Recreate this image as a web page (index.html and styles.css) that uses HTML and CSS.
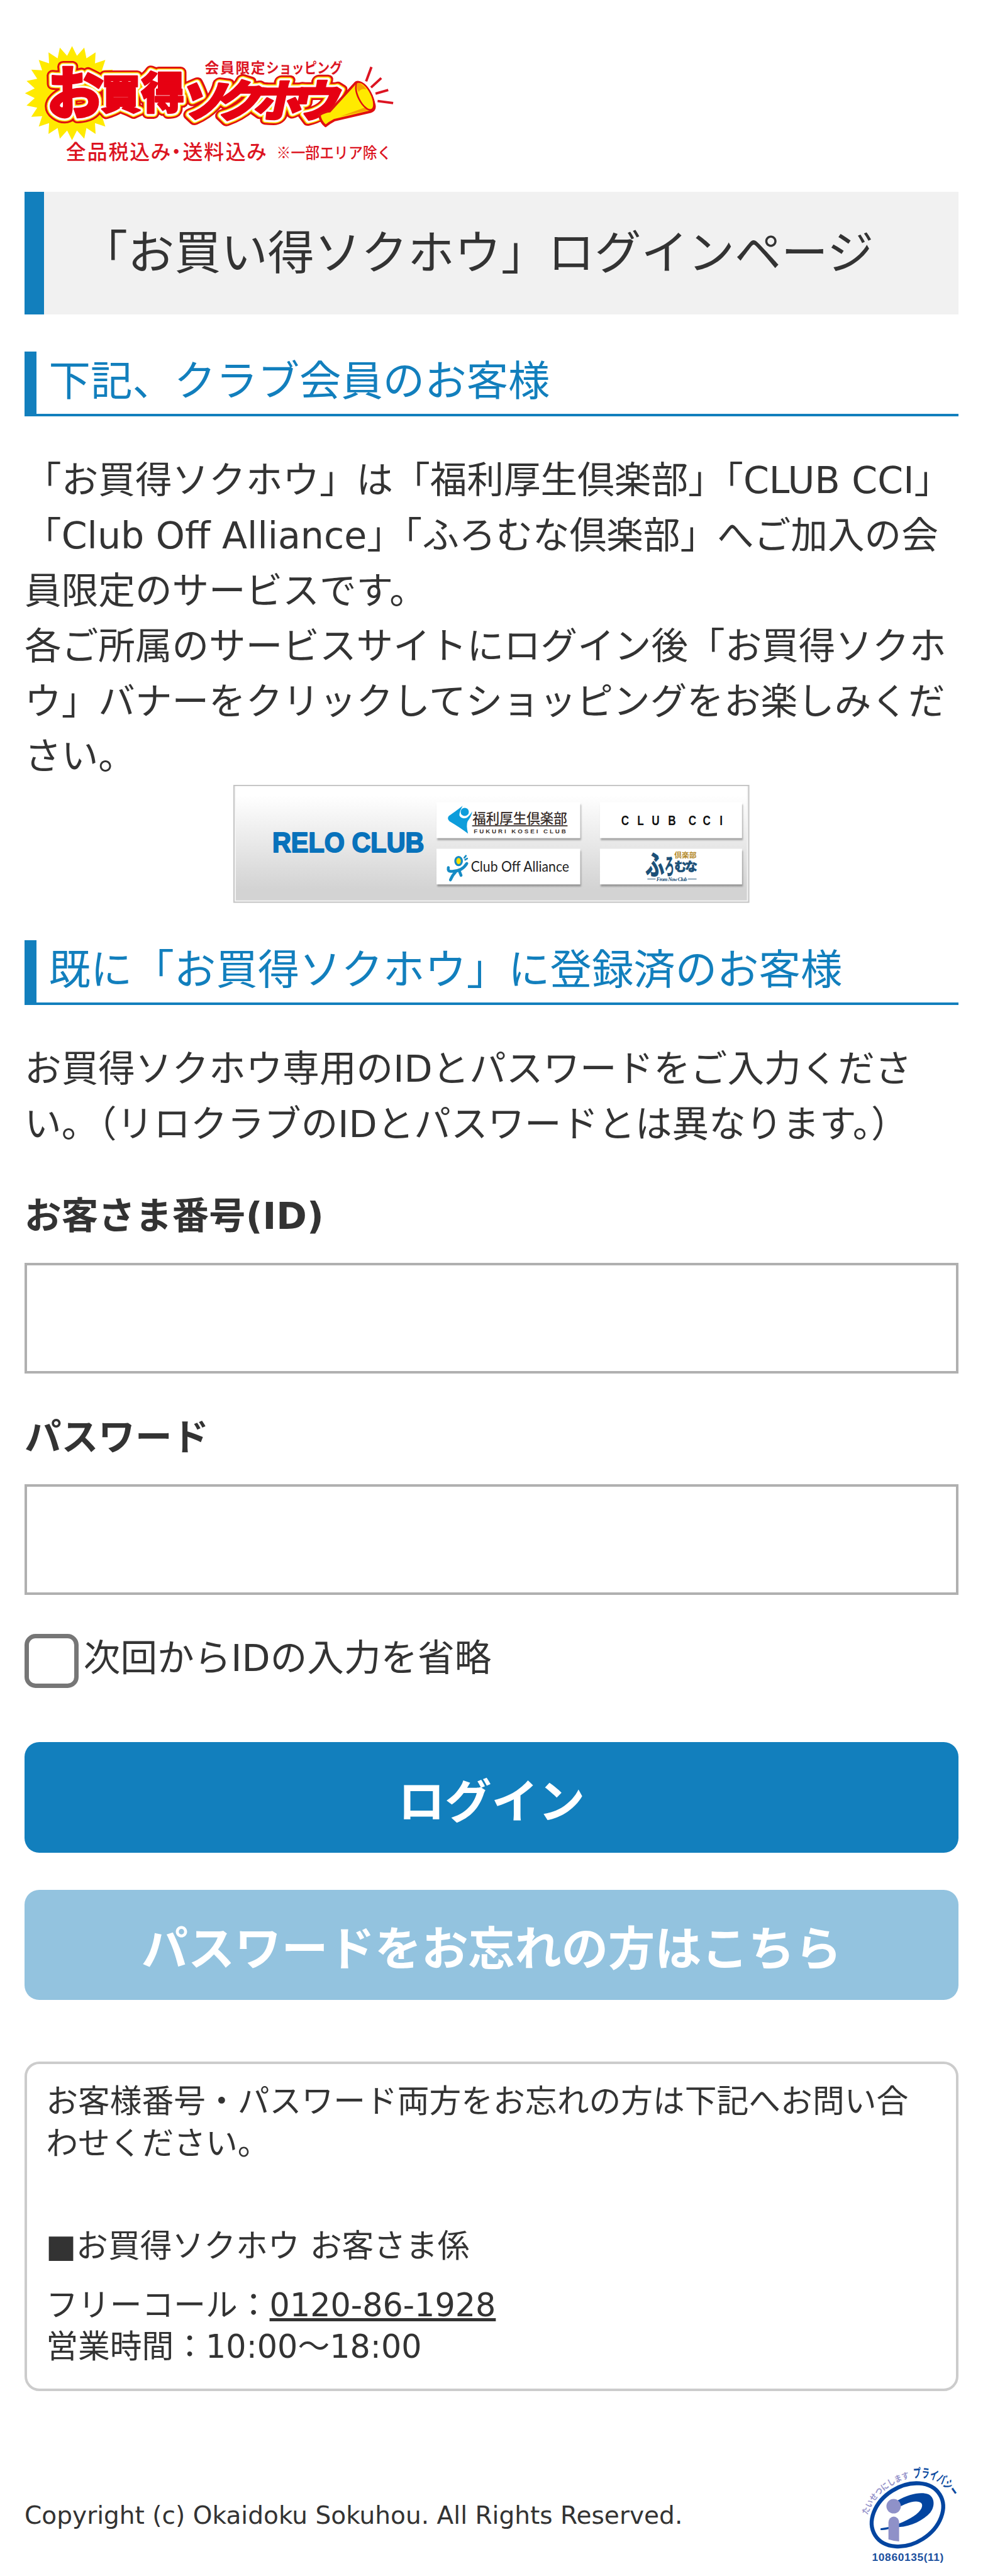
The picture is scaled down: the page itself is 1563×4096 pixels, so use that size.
FILE: index.html
```html
<!DOCTYPE html>
<html lang="ja">
<head>
  <meta charset="UTF-8">
  <title>お買得ソクホウ ログイン</title>
  <link rel="stylesheet" href="styles.css">
</head>
<body>

  <header>
    <svg class="logo" viewBox="0 0 900 330">
      <polygon fill="#ffea00" transform="translate(116 137)" points="0,-115 12,-91.2 29.8,-111.1 35.2,-85 57.5,-99.6 56,-73 81.3,-81.3 73,-56 99.6,-57.5 85,-35.2 111.1,-29.8 91.2,-12 115,0 91.2,12 111.1,29.8 85,35.2 99.6,57.5 73,56 81.3,81.3 56,73 57.5,99.6 35.2,85 29.8,111.1 12,91.2 0,115 -12,91.2 -29.8,111.1 -35.2,85 -57.5,99.6 -56,73 -81.3,81.3 -73,56 -99.6,57.5 -85,35.2 -111.1,29.8 -91.2,12 -115,0 -91.2,-12 -111.1,-29.8 -85,-35.2 -99.6,-57.5 -73,-56 -81.3,-81.3 -56,-73 -57.5,-99.6 -35.2,-85 -29.8,-111.1 -12,-91.2"/>
      <defs>
        <g id="name" class="logo-name">
          <text x="54" y="187" font-size="140">お</text>
          <text x="186" y="175" font-size="98">買</text>
          <text x="285" y="175" font-size="106">得</text>
          <text transform="translate(374 195) skewX(-12) scale(1.1 1)" x="0 80 165 250" y="0" font-size="108">ソクホウ</text>
        </g>
      </defs>
      <use href="#name" class="edge-red"/>
      <use href="#name" class="edge-yellow"/>
      <use href="#name" class="edge-white"/>
      <use href="#name" class="edge-none"/>
      <!-- megaphone -->
      <path d="M720 190Q733 182 745 181Q775 148 806 114Q815 103 832 121Q849 141 854 165Q857 178 845 182L756 203Q746 208 735 217Q722 206 720 190Z" fill="#ffea00" stroke="#e01010" stroke-width="6" stroke-linejoin="round"/>
      <path d="M770 194L836 170L845 178Z" fill="#f5a300"/>
      <ellipse cx="831" cy="144" rx="16" ry="37" transform="rotate(-27 831 144)" fill="#ffea00" stroke="#e01010" stroke-width="4"/>
      <path d="M811 117Q811 109 820 113Q829 119 835 128Q822 124 816 134Q811 126 811 117Z" fill="#f5a300"/>
      <path d="M847 73L834 108M871 100L846 123M888 129L857 138M862 156L900 161" stroke="#dc1422" stroke-width="6"/>
      <g class="logo-copy">
        <text x="440 477.500 515 552.500" y="87" font-size="35" font-weight="700">会員限定</text>
        <text x="590" y="87" font-size="35" font-weight="700" textLength="186" lengthAdjust="spacingAndGlyphs">ショッピング</text>
        <text x="101 153 205 257 308 346 386 438 491 542" y="298" font-size="49">全品税込み・送料込み</text>
        <text x="615" y="296" font-size="38" textLength="281" lengthAdjust="spacingAndGlyphs">※一部エリア除く</text>
      </g>
    </svg>
  </header>

  <h1>「お買い得ソクホウ」ログインページ</h1>

  <h2>下記、クラブ会員のお客様</h2>
  <p>「お買得ソクホウ」は「福利厚生倶楽部」「CLUB CCI」「Club Off Alliance」「ふろむな倶楽部」へご加入の会員限定のサービスです。<br>各ご所属のサービスサイトにログイン後「お買得ソクホウ」バナーをクリックしてショッピングをお楽しみください。</p>

  <svg class="banner" viewBox="0 0 1260 288">
    <defs>
      <linearGradient id="bg" x1="0" y1="0" x2="0" y2="1">
        <stop offset="0.08" stop-color="#fff"/>
        <stop offset="0.9" stop-color="#d3d3d3"/>
      </linearGradient>
    </defs>
    <rect width="1260" height="288" fill="#c4c4c4"/>
    <rect x="3" y="3" width="1254" height="282" fill="#f4f4f4"/>
    <rect x="6" y="3" width="1248" height="279" fill="url(#bg)"/>
    <text class="relo" x="95" y="165" textLength="371" lengthAdjust="spacingAndGlyphs">RELO CLUB</text>
    <g class="card">
      <rect x="496" y="43" width="351" height="87"/>
      <rect x="895" y="43" width="347" height="87"/>
      <rect x="496" y="156" width="351" height="87"/>
      <rect x="895" y="156" width="347" height="87"/>
    </g>
    <!-- fukuri kosei club -->
    <path d="M560 51Q551 67 552 75Q557 84 568 81Q575 79 583 65Q582 76 572 89Q568 98 573 119Q555 105 528 89Q521 82 526 76Q542 65 560 51Z" fill="#0d9ddb"/>
    <circle cx="565" cy="66" r="10" fill="#0d9ddb"/>
    <text x="584" y="94" font-size="34" class="cjk" fill="#3a2f2c" font-weight="500" textLength="231" lengthAdjust="spacingAndGlyphs">福利厚生倶楽部</text>
    <path d="M583 100H816" stroke="#3a2f2c" stroke-width="2.500"/>
    <text x="587" y="118" class="latin" font-size="15" font-weight="700" fill="#3a2f2c" textLength="225">FUKURI KOSEI CLUB</text>
    <!-- club off alliance -->
    <g fill="none" stroke="#168bc4" stroke-width="7" stroke-linecap="round">
      <path d="M525 202Q523 212 532 211Q558 212 570 192"/>
      <path d="M543 212Q535 220 530 232M552 211L556 221"/>
      <path d="M564 178L568 173M566 183L571 180" stroke-width="4"/>
      <ellipse cx="550" cy="186" rx="8" ry="10" fill="#ffe000" stroke-width="5"/>
    </g>
    <text x="580" y="212" class="lato" font-size="34" fill="#222" textLength="240" lengthAdjust="spacingAndGlyphs">Club Off Alliance</text>
    <text transform="scale(.8 1)" x="1184 1233 1277 1327 1389 1433 1484" y="98" class="latin" font-size="33" font-weight="700" fill="#111">CLUBCCI</text>
    <!-- furomuna club -->
    <g class="cjk" fill="#1b5078" stroke="#1b5078" font-weight="700">
      <text transform="translate(1006 220) scale(.7 1)" font-size="66" stroke-width="2">ふ</text>
      <text transform="translate(1053 220) scale(.42 1)" font-size="56">ろ</text>
      <text x="1077" y="210" font-size="30" stroke-width="1.500" textLength="56">むな</text>
    </g>
    <text x="1077" y="178" class="cjk" font-size="18" font-weight="700" fill="#b48a2c">倶楽部</text>
    <text x="1033" y="235" font-size="13" font-weight="700" font-style="italic" class="serif" fill="#1b5078" textLength="75">From Now Club</text>
    <path d="M1011 230H1031M1110 230H1131" stroke="#1b5078" stroke-width="1.500"/>
  </svg>

  <h2>既に「お買得ソクホウ」に登録済のお客様</h2>
  <p>お買得ソクホウ専用のIDとパスワードをご入力ください。（リロクラブのIDとパスワードとは異なります。）</p>

  <form>
    <label class="field" for="loginId">お客さま番号(ID)</label>
    <input class="text" type="text" id="loginId">
    <label class="field" for="password">パスワード</label>
    <input class="text" type="password" id="password">
    <label class="remember"><input type="checkbox">次回からIDの入力を省略</label>
    <button type="button" class="btn">ログイン</button>
    <button type="button" class="btn btn-sub">パスワードをお忘れの方はこちら</button>
  </form>

  <div class="contact">
    <p>お客様番号・パスワード両方をお忘れの方は下記へお問い合わせください。</p>
    <p class="desk">■お買得ソクホウ お客さま係</p>
    <p>フリーコール：<a href="tel:0120861928">0120-86-1928</a><br>営業時間：10:00～18:00</p>
  </div>

  <footer>
    <small>Copyright (c) Okaidoku Sokuhou. All Rights Reserved.</small>
    <svg class="pmark" viewBox="150 100 750 824">
      <defs>
        <path id="arcL" d="M234 488C286 345 406 236 590 206"/>
        <path id="arcR" d="M572 216C700 200 780 245 842 335L900 430"/>
      </defs>
      <text class="cjk" font-size="62" font-weight="700" fill="#9795cb"><textPath href="#arcL" textLength="430" lengthAdjust="spacingAndGlyphs">たいせつにします</textPath></text>
      <text class="cjk" font-size="92" font-weight="700" fill="#0b4a9f"><textPath href="#arcR" textLength="335" lengthAdjust="spacingAndGlyphs">プライバシー</textPath></text>
      <ellipse cx="527" cy="486" rx="280" ry="209" transform="rotate(-32.400 527 486)" fill="none" stroke="#0345a0" stroke-width="29"/>
      <path d="M452 382C540 330 630 315 680 335C728 358 730 425 695 468C645 525 560 567 462 576L464 550C550 515 610 478 630 437C650 392 606 380 555 392C520 401 500 412 470 425ZM330 585L392 575V590Q355 600 330 597Z" fill="#0345a0"/>
      <circle cx="426" cy="423" r="53" fill="#8f91c8"/>
      <path d="M388 540A39 41 0 0 1 466 540V681Q425 677 388 665Z" fill="#8f91c8"/>
      <text x="268" y="825" class="latin" font-size="80" font-weight="700" fill="#1a4f9e" textLength="524">10860135(11)</text>
    </svg>
  </footer>

</body>
</html>
```

FILE: styles.css
```css
* {
  box-sizing: border-box;
}
html {
  font-size: 39.075px;
}
body {
  margin: 0;
  padding: 1.5rem 1rem 0;
  font-family: "DejaVu Sans", "Noto Sans CJK JP", sans-serif;
  font-size: 1.5rem;
  line-height: 1.5;
  color: #333;
  background: #fff;
}
svg {
  display: block;
  overflow: visible;
}
.cjk {
  font-family: "Noto Sans CJK JP", sans-serif;
}
.latin {
  font-family: "Liberation Sans", sans-serif;
}
.lato {
  font-family: Lato, sans-serif;
}
.serif {
  font-family: "Liberation Serif", serif;
}

/* logo */
.logo {
  width: 15rem;
  height: 5.5rem;
  margin-bottom: 0.8rem;
}
.logo-name {
  font-family: "Noto Sans CJK JP", sans-serif;
  font-weight: 900;
  stroke-linejoin: round;
}
.edge-red {
  fill: #e01010;
  stroke: #e01010;
  stroke-width: 28px;
}
.edge-yellow {
  fill: #ffd800;
  stroke: #ffd800;
  stroke-width: 19px;
}
.edge-white {
  fill: #fff;
  stroke: #fff;
  stroke-width: 14px;
}
.edge-none {
  fill: #e60012;
  stroke: #e60012;
  stroke-width: 4px;
}
.logo-copy {
  font-family: "Noto Sans CJK JP", sans-serif;
  font-weight: 500;
  fill: #dc1422;
}

/* headings */
h1 {
  margin: 0 0 1.5rem;
  height: 5rem;
  padding-left: 1.5rem;
  border-left: 0.8rem solid #127fbd;
  background: #f1f1f1;
  font-size: 1.9rem;
  font-weight: normal;
  line-height: 5rem;
}
h2 {
  margin: 0 0 1.5rem;
  height: 2.65rem;
  padding-left: 0.5rem;
  border-left: 0.5rem solid #127fbd;
  border-bottom: 4px solid #127fbd;
  color: #127fbd;
  font-size: 1.7rem;
  font-weight: normal;
  line-height: 2.43rem;
}
p {
  margin: 0;
}
.banner {
  width: 21rem;
  height: 4.8rem;
  margin: 0 auto 1.5rem;
}
.relo {
  font-family: "Liberation Sans", sans-serif;
  font-size: 67px;
  font-weight: bold;
  fill: #0872bb;
  stroke: #0872bb;
  stroke-width: 3px;
  stroke-linejoin: round;
}
.card {
  fill: #fff;
  filter: drop-shadow(2px 5px 2px rgba(0, 0, 0, 0.3));
}

/* form */
.field {
  display: block;
  margin: 1.5rem 0 0.75rem;
  font-weight: bold;
}
.text {
  display: block;
  width: 100%;
  height: 4.5rem;
  border: 4px solid #b0b0b0;
  border-radius: 0;
  background: #fff;
}
.remember {
  display: flex;
  align-items: center;
  gap: 0.2rem;
  height: 2.25rem;
  margin: 1.5rem 0 2.25rem;
}
.remember input {
  appearance: none;
  width: 2.2rem;
  height: 2.2rem;
  margin: 0.15rem 0 0;
  border: 7px solid #767676;
  border-radius: 0.45rem;
}
.btn {
  display: block;
  width: 100%;
  height: 4.5rem;
  margin-bottom: 1.5rem;
  padding: 0;
  border: 0;
  border-radius: 0.6rem;
  background: #127fbd;
  color: #fff;
  font-family: inherit;
  font-size: 1.9rem;
  font-weight: bold;
}
.btn-sub {
  background: #93c3df;
}

/* contact */
.contact {
  height: 13.4rem;
  margin-top: 2.5rem;
  padding: 0.7rem 0.77rem;
  border: 4px solid #ccc;
  border-radius: 0.6rem;
  font-size: 1.3rem;
  line-height: 1.3;
}
.contact .desk {
  margin: 2.5rem 0 0.7rem;
}
.contact a {
  color: #333;
}

footer {
  display: flex;
  justify-content: space-between;
  align-items: center;
  margin-top: 2.9rem;
}
small {
  padding-bottom: 0.2rem;
  font-size: 1rem;
}
.pmark {
  width: 4.167rem;
  height: 4.578rem;
}
```
